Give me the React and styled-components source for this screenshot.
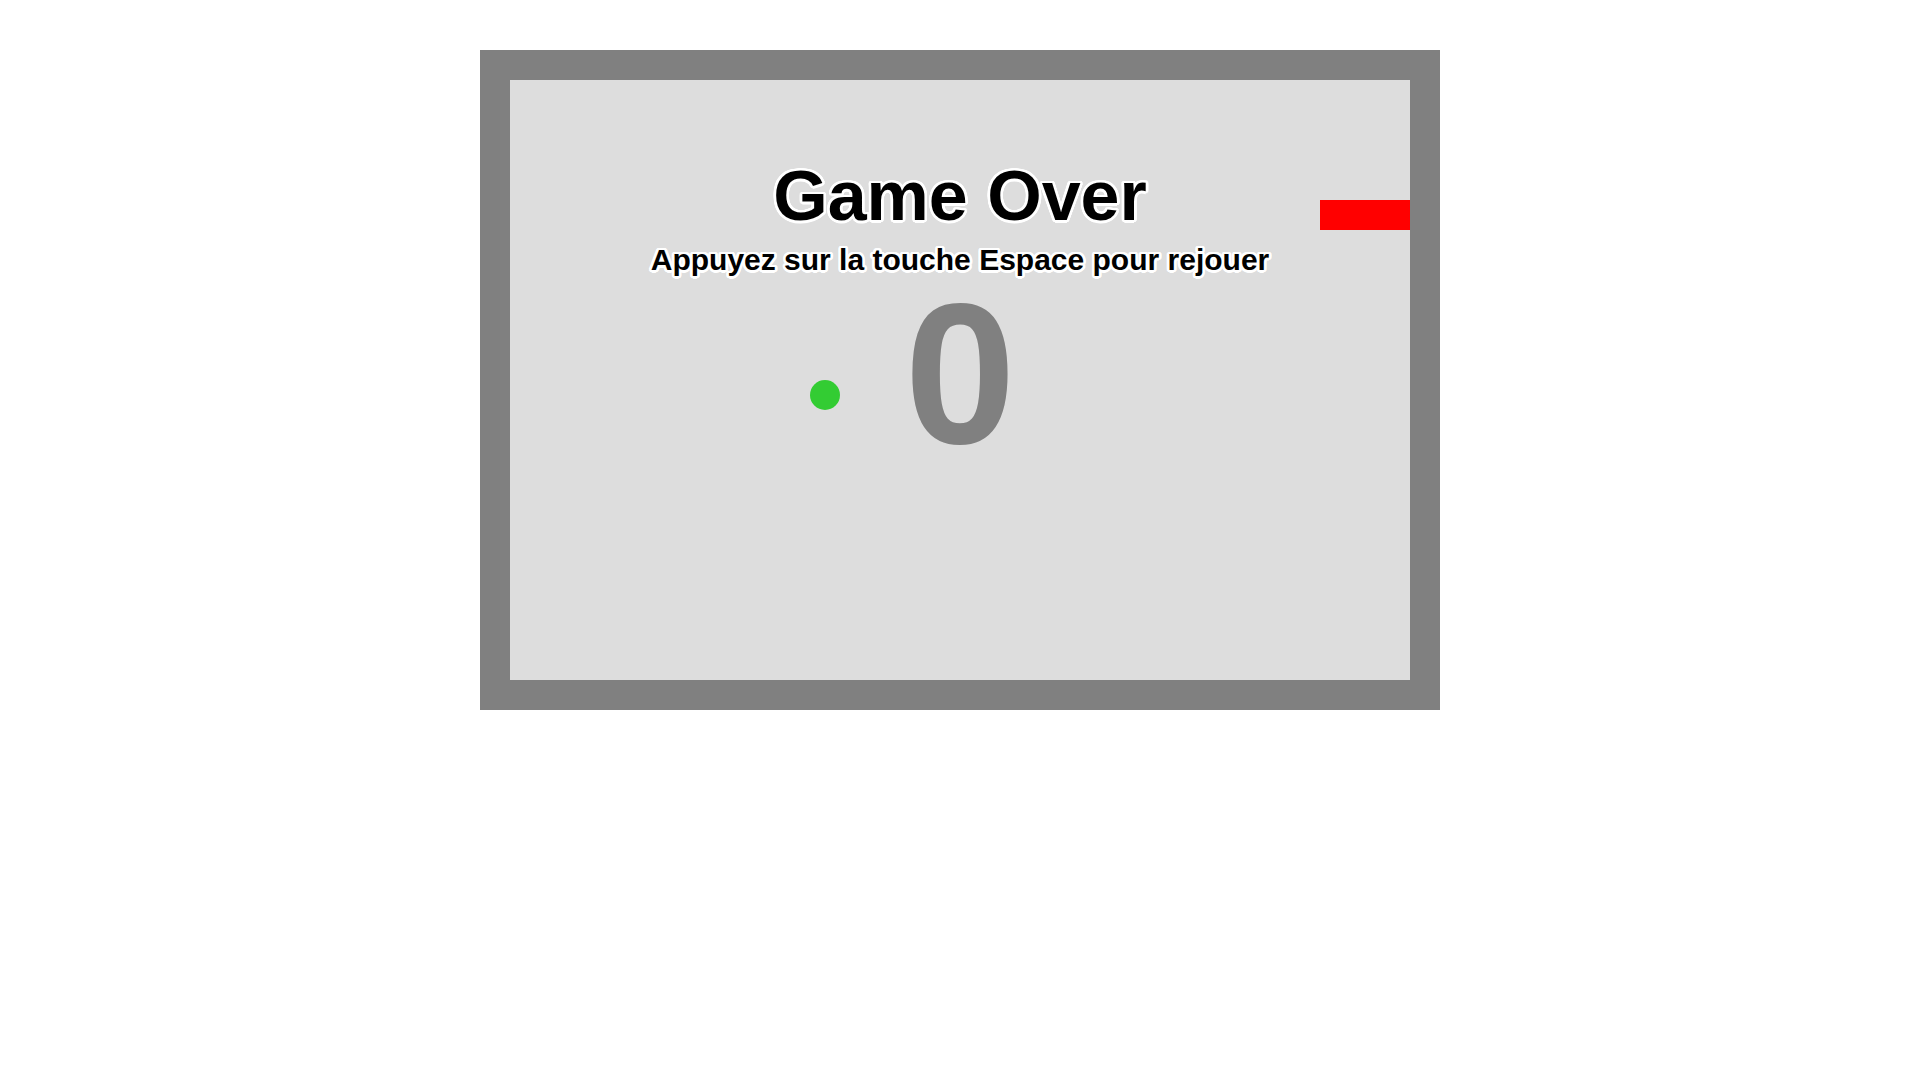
import React from 'react'
import styled, { createGlobalStyle, css } from "styled-components"

const BLOCK = 30

const snake = [
  [29, 4],
  [28, 4],
  [27, 4]
]

const apple = [10, 10]

// white outline around the text, like strokeText with lineWidth 5
const outline = (r) => {
  const shadows = []
  for (let i = 0; i < 24; i++) {
    const a = (i / 24) * Math.PI * 2
    shadows.push(`${(Math.cos(a) * r).toFixed(2)}px ${(Math.sin(a) * r).toFixed(2)}px 0 #ffffff`)
  }
  return shadows.join(", ")
}

const GlobalStyle = createGlobalStyle`
  html, body {
    margin: 0;
    background: #ffffff;
  }
`

const Board = styled.div`
  position: relative;
  width: 900px;
  height: 600px;
  margin: 50px auto;
  border: 30px solid #808080;
  background-color: #dddddd;
  overflow: hidden;
  font-family: "Liberation Sans", Arial, sans-serif;
`

const Overlay = styled.div`
  display: flex;
  flex-direction: column;
  align-items: center;
  padding-top: 84px;
  text-align: center;
`

const stroked = css`
  margin: 0;
  font-weight: bold;
  color: #000000;
  text-shadow: ${outline(2.5)};
`

const Title = styled.h1`
  ${stroked}
  font-size: 70px;
  line-height: 64px;
`

const Subtitle = styled.h2`
  ${stroked}
  margin-top: 20px;
  font-size: 30px;
  line-height: 24px;
`

const Score = styled.div`
  margin-top: 27px;
  font-size: 200px;
  line-height: 150px;
  font-weight: bold;
  color: #808080;
`

const Segment = styled.div`
  position: absolute;
  width: ${BLOCK}px;
  height: ${BLOCK}px;
  background-color: #ff0000;
`

const Apple = styled.div`
  position: absolute;
  width: ${BLOCK}px;
  height: ${BLOCK}px;
  border-radius: 50%;
  background-color: #33cc33;
`

const App = () => {
  return (
    <>
      <GlobalStyle />
      <Board>
        <Overlay>
          <Title>Game Over</Title>
          <Subtitle>Appuyez sur la touche Espace pour rejouer</Subtitle>
          <Score>0</Score>
        </Overlay>
        {snake.map(([x, y]) => (
          <Segment key={x + "-" + y} style={{ left: x * BLOCK, top: y * BLOCK }} />
        ))}
        <Apple style={{ left: apple[0] * BLOCK, top: apple[1] * BLOCK }} />
      </Board>
    </>
  )
}

export default App
